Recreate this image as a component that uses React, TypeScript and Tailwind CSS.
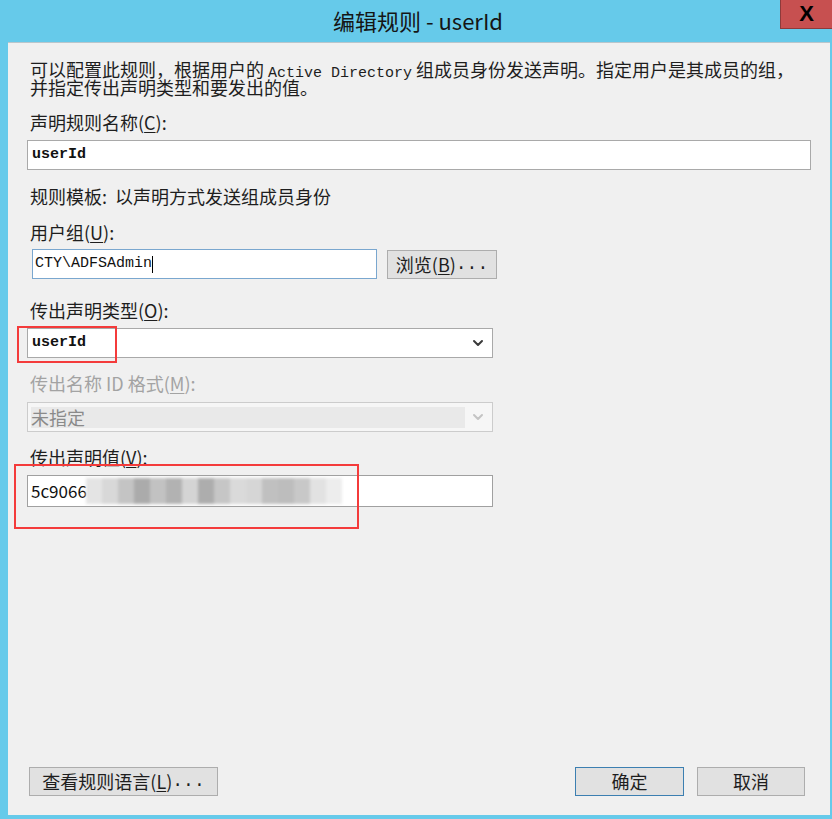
import { ChevronDown } from 'lucide-react'

const cjk = { fontFamily: '"Noto Sans CJK SC", "Noto Sans", sans-serif' }
const mono = { fontFamily: '"Liberation Mono", "Noto Sans CJK SC", monospace' }

function Label({ text, mn, disabled }: { text: string; mn: string; disabled?: boolean }) {
  return (
    <div className={`h-[20px] text-[18px] leading-[20px] whitespace-nowrap ${disabled ? 'text-[#a3a3a3]' : 'text-[#1e1e1e]'}`}>
      {text}(<span className="underline underline-offset-2">{mn}</span>):
    </div>
  )
}

const blurBlocks = ['#e4e4e4', '#d8d8d8', '#c4c4c4', '#ababab', '#c2c2c2', '#b2b2b2', '#d4d4d4', '#adadad', '#c6c6c6', '#dadada', '#d6d6d6', '#c0c0c0', '#bdbdbd', '#c8c8c8', '#e2e2e2', '#ededed']

function WinButton({ children, primary, className }: { children: React.ReactNode; primary?: boolean; className?: string }) {
  return (
    <button
      className={`h-[29px] bg-[#e1e1e1] border text-[18px] text-[#1e1e1e] flex items-center justify-center ${primary ? 'border-[#3c7fb1]' : 'border-[#adadad]'} ${className ?? ''}`}
    >
      {children}
    </button>
  )
}

export default function App() {
  return (
    <div className="w-[832px] h-[819px] bg-[#66caea] flex flex-col overflow-hidden" style={cjk}>
      {/* title bar */}
      <div className="h-[42px] flex relative shrink-0">
        <div className="flex-1 flex items-start justify-center pt-[4px] pl-[4px] text-[22px] text-[#151515]">编辑规则 - userId</div>
        <div className="absolute right-0 top-0 w-[52px] h-[29px] bg-[#c75050] border-l border-b border-[#8e3a3a] flex items-center justify-center text-[22px] font-bold text-black leading-none" style={{ fontFamily: '"Liberation Sans", sans-serif' }}>
          X
        </div>
      </div>

      {/* body */}
      <div className="flex-1 ml-[8px] mr-[2px] mb-[4px] bg-[#f0f0f0] border-t border-[#b9c6cc] flex flex-col px-[19px] pb-[19px]">
        <div className="mt-[17px] pl-[3px] text-[18px] leading-[18px] text-[#1e1e1e] whitespace-nowrap">
          <div className="h-[18px]">
            可以配置此规则，根据用户的&nbsp;<span className="text-[15px] leading-[18px]" style={mono}>Active Directory</span>&nbsp;组成员身份发送声明。指定用户是其成员的组，
          </div>
          <div className="h-[18px]">并指定传出声明类型和要发出的值。</div>
        </div>

        <div className="mt-[16px] pl-[3px]"><Label text="声明规则名称" mn="C" /></div>
        <div className="mt-[8px] h-[30px] bg-white border border-[#a9a9a9] flex items-center pl-[4px] text-[15px] font-bold text-[#111]" style={mono}>userId</div>

        <div className="mt-[16px] pl-[3px] h-[20px] text-[18px] leading-[20px] text-[#1e1e1e] whitespace-nowrap">规则模板:&nbsp;&nbsp;以声明方式发送组成员身份</div>

        <div className="mt-[16px] pl-[3px]"><Label text="用户组" mn="U" /></div>
        <div className="mt-[7px] flex items-start gap-[10px] ml-[5px]">
          <div className="w-[345px] h-[30px] bg-white border border-[#7aa7cf] flex items-center pl-[2px] text-[15px] text-[#111]" style={mono}>
            CTY\ADFSAdmin<span className="inline-block w-px h-[17px] bg-black" />
          </div>
          <WinButton className="w-[110px] mt-[1px]">
            浏览(<span className="underline underline-offset-2">B</span>)<span style={mono}>...</span>
          </WinButton>
        </div>

        <div className="mt-[21px] pl-[3px]"><Label text="传出声明类型" mn="O" /></div>
        <div className="mt-[8px] relative w-[466px]">
          <div className="h-[30px] bg-white border border-[#a9a9a9] flex items-center justify-between pl-[4px] pr-[6px]">
            <span className="text-[15px] font-bold text-[#111]" style={mono}>userId</span>
            <ChevronDown size={16} strokeWidth={3} className="text-[#3a3a3a]" />
          </div>
          <div className="absolute left-[-10px] top-[-2px] w-[100px] h-[37px] border-2 border-[#f43b3b]" />
        </div>

        <div className="mt-[15px] pl-[3px]"><Label text="传出名称 ID 格式" mn="M" disabled /></div>
        <div className="mt-[9px] w-[466px] h-[30px] bg-[#f6f6f6] border border-[#cccccc] flex items-center pl-[3px] pr-[6px]">
          <div className="w-[434px] h-[21px] bg-[#e9e9e9] text-[18px] leading-[21px] text-[#8a8a8a]">未指定</div>
          <ChevronDown size={16} strokeWidth={3} className="ml-auto text-[#c4c4c4]" />
        </div>

        <div className="mt-[15px] pl-[3px]"><Label text="传出声明值" mn="V" /></div>
        <div className="mt-[8px] relative w-[466px]">
          <div className="h-[32px] bg-white border border-[#a0a0a0] flex items-center pl-[3px] text-[17px] text-[#111] relative overflow-hidden">
            5c9066<span className="text-[#999]">b</span>
            <div className="absolute left-[58px] top-[2px] h-[26px] flex blur-[1.5px]">
              {blurBlocks.map((c, i) => (
                <div key={i} className="w-[16px] h-full" style={{ background: c }} />
              ))}
            </div>
          </div>
          <div className="absolute left-[-13px] top-[-11px] w-[345px] h-[65px] border-2 border-[#f43b3b]" />
        </div>

        <div className="mt-auto flex items-center">
          <WinButton className="w-[189px] ml-[2px]">
            查看规则语言(<span className="underline underline-offset-2">L</span>)<span style={mono}>...</span>
          </WinButton>
          <WinButton primary className="w-[109px] ml-auto">确定</WinButton>
          <WinButton className="w-[108px] ml-[13px] mr-[6px]">取消</WinButton>
        </div>
      </div>
    </div>
  )
}
